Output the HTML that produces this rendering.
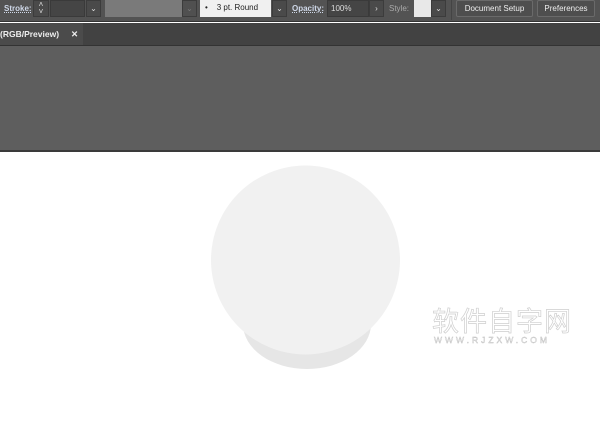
<!DOCTYPE html><html><head><style>
*{margin:0;padding:0;box-sizing:border-box}
body{width:600px;height:433px;overflow:hidden;background:#fff;font-family:"Liberation Sans",sans-serif;position:relative}
.a{position:absolute}
.t{font-size:8px;color:#ddd;line-height:16px;top:1px}
.f{top:0;height:17px;background:#454545;border:1px solid #3a3a3a}
.dd{top:0;height:17px;background:#4a4a4a;border:1px solid #3c3c3c;color:#ddd;font-size:8px;text-align:center;line-height:15px}
.btn{top:0;height:17px;border:1px solid #6a6a6a;border-radius:2px;background:#4e4e4e;color:#eee;font-size:8px;text-align:center;line-height:15px}
</style></head><body>
<div class="a" style="left:0;top:0;width:600px;height:22px;background:#535353;border-bottom:1px solid #333"></div>
<div class="a t" style="left:4px;text-decoration:underline dotted;font-weight:bold;color:#cfd8e8">Stroke:</div>
<div class="a dd" style="left:33px;width:16px;line-height:7px">˄<br>˅</div>
<div class="a f" style="left:50px;width:35px"></div>
<div class="a dd" style="left:86px;width:15px">⌄</div>
<div class="a" style="left:105px;top:0;width:77px;height:17px;background:#7a7a7a"></div>
<div class="a dd" style="left:182px;width:15px;color:#777;background:#505050">⌄</div>
<div class="a" style="left:200px;top:0;width:71px;height:17px;background:#f0f0f0;font-size:8px;line-height:16px;color:#222;padding-left:5px">•&nbsp;&nbsp;&nbsp;&nbsp;3 pt. Round</div>
<div class="a dd" style="left:272px;width:15px">⌄</div>
<div class="a t" style="left:292px;font-weight:bold;text-decoration:underline dotted;color:#cfd8e8">Opacity:</div>
<div class="a f" style="left:327px;width:42px;font-size:8px;color:#ddd;line-height:15px;padding-left:3px">100%</div>
<div class="a dd" style="left:369px;width:15px">›</div>
<div class="a t" style="left:389px;color:#aaa">Style:</div>
<div class="a" style="left:414px;top:0;width:17px;height:17px;background:#e8e8e8"></div>
<div class="a dd" style="left:431px;width:15px">⌄</div>
<div class="a" style="left:451px;top:0;width:1px;height:20px;background:#444"></div>
<div class="a btn" style="left:456px;width:77px">Document Setup</div>
<div class="a btn" style="left:537px;width:58px">Preferences</div>
<div class="a" style="left:0;top:23px;width:600px;height:23px;background:#424242;border-bottom:1px solid #333"></div>
<div class="a" style="left:0;top:23px;width:83px;height:22px;background:#4b4b4b;color:#eee;font-size:8.5px;font-weight:bold;line-height:22px">(RGB/Preview)<span style="margin-left:12px">✕</span></div>
<div class="a" style="left:0;top:46px;width:600px;height:104px;background:#5e5e5e"></div>
<div class="a" style="left:0;top:150px;width:600px;height:2px;background:#3a3a3a"></div>
<svg class="a" style="left:0;top:0" width="600" height="433">
<ellipse cx="307" cy="324" rx="64" ry="45" fill="#e6e6e6"/>
<circle cx="305.5" cy="260" r="94.5" fill="#f1f1f1"/>
<text x="432" y="331" font-size="27" fill="#fff" stroke="#cfcfcf" stroke-width="0.7" font-family="Noto Sans CJK SC,sans-serif" letter-spacing="1">软件自字网</text>
<text x="434" y="343" font-size="8.5" fill="#fff" stroke="#bbb" stroke-width="0.4" letter-spacing="3">WWW.RJZXW.COM</text>
</svg>
</body></html>
